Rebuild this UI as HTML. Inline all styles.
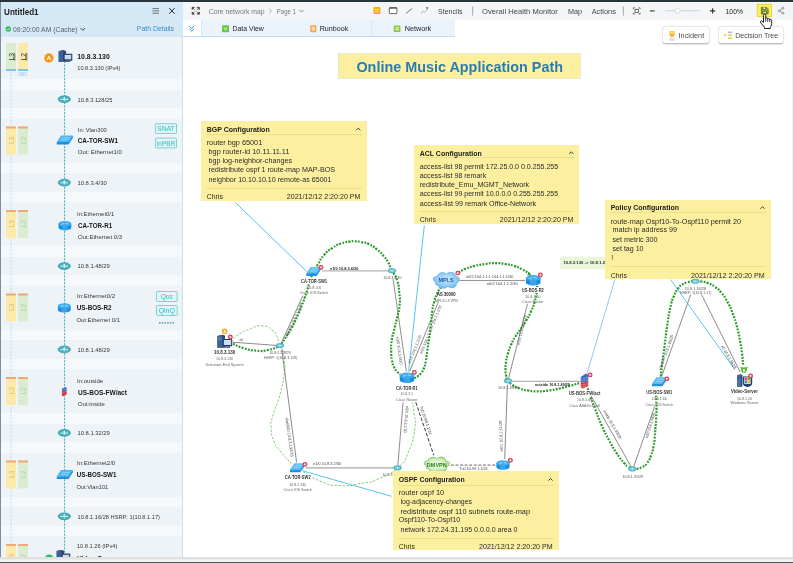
<!DOCTYPE html>
<html><head><meta charset="utf-8"><title>Online Music Application Path</title>
<style>
html,body{margin:0;padding:0;}
body{width:793px;height:563px;overflow:hidden;background:#fff;position:relative;font-family:"Liberation Sans",sans-serif;}
div{position:absolute;box-sizing:border-box;}
svg{position:absolute;left:0;top:0;will-change:transform;}
svg text{font-family:"Liberation Sans",sans-serif;}
#topbar{left:0;top:0;width:793px;height:2px;background:#27343c;}
#leftedge{left:0;top:2px;width:1px;height:555px;background:#7f8f9a;}
#panel{left:1px;top:2px;width:182px;height:555px;background:#eef3f7;overflow:hidden;}
#pborder{left:181px;top:34.6px;width:1px;height:521px;background:#c9e0f1;}
#ptitle{left:0;top:0;width:182px;height:18.5px;background:#d5e8f6;border-bottom:1px solid #c9dfef;}
#psub{left:0;top:18px;width:182px;height:17px;background:#d5e8f6;}
.gap{left:0;width:181px;background:#f6f9fc;}
#toolbar{left:183px;top:2px;width:610px;height:18px;background:#f4f5f6;}
#tabs{left:183px;top:20px;width:272px;height:17px;background:#eaf3fb;border-bottom:1px solid #c5dcee;}
#tabs .chev{left:0;top:0;width:18.6px;height:16px;background:#fff;border-right:1px solid #d5e6f3;}
#tabs .sep{top:0;width:1px;height:16px;background:#dbe9f5;}
#bottombar{left:0;top:557.3px;width:793px;height:4.4px;background:linear-gradient(#e6e6e6 0,#dadada 22%,#ebebeb 45%,#f4f4f4 80%,#fbfbfb 100%);}
#redge{left:792px;top:20px;width:1px;height:537px;background:#f1f2f3;}
#bottomline{left:0;top:561.8px;width:793px;height:2px;background:#505050;}
.note{background:#fcf0a0;}
.note .hl{left:5px;right:5px;height:1px;background:#f1dd84;}
.btn{background:#fff;border-radius:2px;box-shadow:0 0.5px 2px rgba(0,0,0,.35);}
</style></head><body>
<div id="topbar"></div>
<div id="leftedge"></div>
<div id="panel">
<div id="ptitle"></div><div id="psub"></div><div id="pborder"></div>
<div class="gap" style="top:77.2px;height:10.6px"></div>
<div class="gap" style="top:106.2px;height:10.6px"></div>
<div class="gap" style="top:160.7px;height:10.6px"></div>
<div class="gap" style="top:189.7px;height:10.6px"></div>
<div class="gap" style="top:244.3px;height:10.6px"></div>
<div class="gap" style="top:273.3px;height:10.6px"></div>
<div class="gap" style="top:327.8px;height:10.6px"></div>
<div class="gap" style="top:356.8px;height:10.6px"></div>
<div class="gap" style="top:411.4px;height:10.6px"></div>
<div class="gap" style="top:440.4px;height:10.6px"></div>
<div class="gap" style="top:494.9px;height:10.6px"></div>
<div class="gap" style="top:523.9px;height:10.6px"></div>
</div>
<div id="toolbar"></div>
<div id="tabs"><div class="chev"></div><div class="sep" style="left:188px"></div></div>
<svg width="793" height="563" viewBox="0 0 793 563">
<defs>
<radialGradient id="gmpls" cx="0.5" cy="0.45" r="0.6"><stop offset="0" stop-color="#cfe9fb"/><stop offset="0.55" stop-color="#9dd0f5"/><stop offset="1" stop-color="#62b4ee"/></radialGradient>
<radialGradient id="gdm" cx="0.5" cy="0.5" r="0.6"><stop offset="0" stop-color="#f1fbe8"/><stop offset="0.6" stop-color="#d5f0c0"/><stop offset="1" stop-color="#8fd16f"/></radialGradient>
</defs>
<path d="M233.0 338.4 C235.5 336.8 234.8 336.6 240.5 333.5 C246.2 330.4 242.8 331.6 250.0 329.0 C257.2 326.4 254.7 325.5 262.0 325.8 C269.3 326.1 267.2 326.8 272.0 330.0 C276.8 333.2 274.3 331.5 276.5 335.5 C278.7 339.5 277.8 339.8 278.5 342.0" fill="none" stroke="#5cb548" stroke-width="0.75" stroke-dasharray="2.4 1.5"/>
<path d="M282.6 349.7 C283.3 353.8 284.1 353.8 284.6 362.0 C285.1 370.2 285.9 363.0 284.2 374.3 C282.5 385.6 283.3 382.1 279.5 396.0 C275.7 409.9 275.6 405.2 272.8 416.0 C270.0 426.8 270.8 420.1 271.2 428.4 C271.6 436.7 271.0 433.5 274.0 441.0 C277.0 448.5 274.0 443.2 280.1 451.0 C286.2 458.8 288.3 459.9 292.4 464.3" fill="none" stroke="#5cb548" stroke-width="0.75" stroke-dasharray="2.4 1.5"/>
<path d="M302.8 471.5 C308.8 474.8 308.5 476.6 320.8 481.3 C333.1 486.0 325.8 484.9 339.7 485.5 C353.6 486.1 349.2 485.5 362.4 483.2 C375.6 480.9 367.3 484.0 379.4 478.5 C391.5 473.0 389.2 475.3 398.8 466.6 C408.4 457.9 402.8 465.3 408.2 452.4 C413.6 439.5 413.0 440.6 414.9 427.8 C416.8 415.0 414.8 422.5 414.0 414.0 C413.2 405.5 413.1 406.2 412.6 402.3" fill="none" stroke="#5cb548" stroke-width="0.75" stroke-dasharray="2.4 1.5"/>
<line x1="232.5" y1="342.2" x2="276" y2="345.4" stroke="#3c3c3c" stroke-width="0.6"/>
<line x1="281.1" y1="343.4" x2="302.9" y2="295.6" stroke="#3c3c3c" stroke-width="0.6"/>
<line x1="281.7" y1="348.8" x2="296.6" y2="462.4" stroke="#3c3c3c" stroke-width="0.6"/>
<line x1="322" y1="270.9" x2="388" y2="270.9" stroke="#8c8c8c" stroke-width="0.8"/>
<line x1="393.1" y1="279.2" x2="406.4" y2="371.5" stroke="#3c3c3c" stroke-width="0.6"/>
<line x1="409.6" y1="371.5" x2="438.5" y2="301.5" stroke="#3c3c3c" stroke-width="0.6"/>
<line x1="459.5" y1="280.45" x2="525" y2="280.45" stroke="#6a6a6a" stroke-width="0.75"/>
<line x1="527.5" y1="303.8" x2="508.4" y2="379" stroke="#3c3c3c" stroke-width="0.6"/>
<line x1="512.2" y1="381.3" x2="580.2" y2="381.3" stroke="#8c8c8c" stroke-width="0.8"/>
<line x1="507.4" y1="384.7" x2="504.7" y2="459" stroke="#3c3c3c" stroke-width="0.6"/>
<line x1="305.7" y1="467.8" x2="394" y2="467.8" stroke="#a9a9a9" stroke-width="1.2"/>
<line x1="397.8" y1="465.7" x2="403.1" y2="402.3" stroke="#3c3c3c" stroke-width="0.6"/>
<line x1="415.8" y1="402.3" x2="433.8" y2="455.3" stroke="#222" stroke-width="0.9" stroke-dasharray="3.6 1.8"/>
<line x1="450.8" y1="465.1" x2="496.2" y2="465.1" stroke="#555" stroke-width="0.9" stroke-dasharray="3 1.6"/>
<line x1="591.2" y1="396" x2="631.5" y2="467.4" stroke="#3c3c3c" stroke-width="0.6"/>
<line x1="633.4" y1="467.4" x2="654.6" y2="406.5" stroke="#3c3c3c" stroke-width="0.6"/>
<line x1="661.8" y1="376" x2="690.7" y2="294.6" stroke="#3c3c3c" stroke-width="0.6"/>
<line x1="701.5" y1="294.6" x2="740.2" y2="372.1" stroke="#3c3c3c" stroke-width="0.6"/>
<line x1="235.3" y1="202.5" x2="306.9" y2="271.6" stroke="#2fb4f2" stroke-width="0.8"/>
<line x1="424.3" y1="225.5" x2="408.6" y2="371.5" stroke="#2fb4f2" stroke-width="0.8"/>
<line x1="614.9" y1="279.5" x2="587.0" y2="373.4" stroke="#4f9ff0" stroke-width="0.6"/>
<line x1="670.5" y1="279.5" x2="734.8" y2="369.5" stroke="#2fb4f2" stroke-width="0.8"/>
<line x1="302.8" y1="470.9" x2="391.5" y2="496.3" stroke="#2fb4f2" stroke-width="0.8"/>
<path d="M233.0 343.7 C236.7 345.2 236.1 346.0 244.0 348.3 C251.9 350.6 248.7 350.1 256.7 350.7 C264.7 351.3 261.1 351.3 268.0 350.0 C274.9 348.7 274.3 347.9 277.5 346.9" fill="none" stroke="#2c9a2a" stroke-width="2.2" stroke-dasharray="1.9 1.3"/>
<path d="M281.5 344.0 C283.2 341.3 283.1 341.4 286.5 336.0 C289.9 330.6 288.8 333.0 291.7 327.9 C294.6 322.8 292.9 325.6 295.2 320.8 C297.5 316.0 296.3 318.7 298.5 313.6 C300.7 308.5 299.7 310.9 301.8 305.5 C303.9 300.1 303.2 301.7 304.8 297.4 C306.4 293.1 305.5 295.8 306.5 292.5 C307.5 289.2 306.9 291.0 307.9 287.5 C308.9 284.0 308.4 285.7 309.6 282.0 C310.8 278.3 310.2 279.8 311.6 276.3 C313.0 272.8 313.0 273.0 313.7 271.4" fill="none" stroke="#2c9a2a" stroke-width="2.2" stroke-dasharray="1.9 1.3"/>
<path d="M315.0 268.5 C316.1 267.0 315.2 268.5 318.2 264.0 C321.2 259.5 319.3 260.3 324.0 255.0 C328.7 249.7 326.7 251.8 332.4 248.0 C338.1 244.2 335.3 245.6 341.0 243.5 C346.7 241.4 344.9 242.4 349.4 241.7 C353.9 241.0 350.7 241.2 354.6 241.3 C358.5 241.4 356.2 241.0 361.0 242.0 C365.8 243.0 363.6 241.7 368.9 244.2 C374.2 246.7 372.0 245.4 377.0 249.5 C382.0 253.6 380.3 252.3 384.0 256.5 C387.7 260.7 385.8 258.2 388.0 262.0 C390.2 265.8 389.4 264.9 390.7 267.8 C392.0 270.7 391.6 269.7 392.0 270.7" fill="none" stroke="#2c9a2a" stroke-width="2.2" stroke-dasharray="1.9 1.3"/>
<path d="M393.5 273.0 C394.8 275.7 395.4 274.3 397.3 281.0 C399.2 287.7 398.5 284.8 399.3 293.0 C400.1 301.2 400.4 297.4 399.6 305.7 C398.8 314.0 398.7 310.3 397.0 318.0 C395.3 325.7 396.1 321.6 394.4 328.9 C392.7 336.2 392.9 332.4 391.8 340.0 C390.7 347.6 391.1 344.9 391.2 351.6 C391.3 358.3 391.1 355.0 392.0 360.0 C392.9 365.0 392.2 362.9 393.9 366.7 C395.6 370.5 394.9 369.0 397.0 371.5 C399.1 374.0 399.1 373.4 400.1 374.3" fill="none" stroke="#2c9a2a" stroke-width="2.2" stroke-dasharray="1.9 1.3"/>
<path d="M414.5 378.2 C415.7 377.5 415.8 377.7 418.0 376.0 C420.2 374.3 419.1 375.5 421.0 373.0 C422.9 370.5 422.2 372.6 423.8 368.6 C425.4 364.6 424.7 366.7 425.8 361.0 C426.9 355.3 426.2 358.6 427.2 351.6 C428.2 344.6 427.7 347.6 428.8 340.0 C429.9 332.4 429.6 335.3 430.4 328.9 C431.2 322.5 430.7 326.8 431.3 320.8 C431.9 314.8 431.3 317.3 432.3 311.0 C433.3 304.7 432.6 307.6 434.2 301.9 C435.8 296.2 434.9 298.7 437.0 294.0 C439.1 289.3 439.3 289.8 440.4 287.7" fill="none" stroke="#2c9a2a" stroke-width="2.2" stroke-dasharray="1.9 1.3"/>
<path d="M458.5 272.6 C460.8 271.3 460.1 271.0 465.5 268.8 C470.9 266.6 468.1 267.6 474.6 266.0 C481.1 264.4 478.1 265.0 485.0 264.0 C491.9 263.0 488.7 263.1 495.4 263.1 C502.1 263.1 498.7 263.0 505.0 264.0 C511.3 265.0 508.6 264.2 514.3 266.0 C520.0 267.8 517.0 266.8 522.0 269.3 C527.0 271.8 526.9 272.1 529.4 273.5" fill="none" stroke="#2c9a2a" stroke-width="2.2" stroke-dasharray="1.9 1.3"/>
<path d="M537.2 286.0 C537.0 288.3 537.5 287.7 536.6 293.0 C535.7 298.3 536.5 295.8 534.6 302.0 C532.7 308.2 533.8 305.3 531.0 311.5 C528.2 317.7 529.6 314.8 526.3 320.5 C523.0 326.2 524.6 323.2 521.0 328.5 C517.4 333.8 518.7 331.0 515.4 336.5 C512.1 342.0 513.5 339.3 511.0 345.0 C508.5 350.7 509.7 347.8 508.0 353.5 C506.3 359.2 506.8 356.8 506.0 362.0 C505.2 367.2 505.5 364.7 505.5 369.0 C505.5 373.3 505.3 371.3 506.0 375.0 C506.7 378.7 505.4 376.7 507.6 380.0 C509.8 383.3 508.5 382.2 512.5 385.0 C516.5 387.8 514.5 386.7 519.7 388.5 C524.9 390.3 522.3 389.6 528.0 390.5 C533.7 391.4 530.0 391.3 536.7 391.3 C543.4 391.3 540.4 391.5 548.0 390.6 C555.6 389.7 552.1 390.1 559.4 388.5 C566.7 386.9 563.1 387.7 570.0 385.8 C576.9 383.9 576.8 383.8 580.2 382.8" fill="none" stroke="#2c9a2a" stroke-width="2.2" stroke-dasharray="1.9 1.3"/>
<path d="M586.5 386.0 C586.8 386.5 586.1 383.9 587.4 387.6 C588.7 391.3 588.0 390.1 590.5 397.0 C593.0 403.9 591.3 399.1 595.0 408.4 C598.7 417.7 596.8 414.3 601.5 425.0 C606.2 435.7 604.2 431.2 609.2 440.5 C614.2 449.8 611.5 445.4 616.5 453.0 C621.5 460.6 620.5 458.8 624.3 463.2 C628.1 467.6 625.8 464.7 628.0 466.3 C630.2 467.9 629.9 467.4 630.9 468.0" fill="none" stroke="#2c9a2a" stroke-width="2.2" stroke-dasharray="1.9 1.3"/>
<path d="M636.6 468.9 C638.6 468.3 639.0 468.9 642.5 467.0 C646.0 465.1 644.2 467.0 647.0 463.2 C649.8 459.4 648.8 461.2 651.0 455.5 C653.2 449.8 652.3 452.4 653.6 446.2 C654.9 440.0 654.2 443.3 654.8 437.0 C655.4 430.7 655.0 433.6 655.5 427.3 C656.0 421.0 655.9 424.3 656.2 418.0 C656.5 411.7 656.5 414.1 656.5 408.4 C656.5 402.7 656.4 405.2 656.3 401.0 C656.2 396.8 656.2 397.5 656.1 395.8" fill="none" stroke="#2c9a2a" stroke-width="2.2" stroke-dasharray="1.9 1.3"/>
<path d="M659.5 386.0 C659.9 382.7 659.8 384.3 660.8 376.0 C661.8 367.7 661.2 371.1 662.5 361.0 C663.8 350.9 663.1 357.0 664.6 345.7 C666.1 334.4 665.1 339.6 667.0 327.0 C668.9 314.4 668.1 317.8 670.3 307.8 C672.5 297.8 671.0 303.3 673.5 297.0 C676.0 290.7 675.0 293.0 677.8 288.9 C680.6 284.8 678.8 287.0 682.0 284.8 C685.2 282.6 682.8 283.6 687.3 282.3 C691.8 281.0 690.5 281.2 695.4 281.0 C700.3 280.8 697.8 280.9 702.0 281.6 C706.2 282.3 703.8 281.4 708.1 283.2 C712.4 285.0 710.6 283.8 715.0 287.0 C719.4 290.2 717.1 287.7 721.3 292.7 C725.5 297.7 723.7 295.1 727.5 302.0 C731.3 308.9 729.5 305.2 732.7 313.5 C735.9 321.8 734.5 317.5 737.0 327.0 C739.5 336.5 738.5 333.2 740.2 341.9 C741.9 350.6 741.0 345.4 742.0 353.0 C743.0 360.6 742.7 360.7 743.1 364.6" fill="none" stroke="#2c9a2a" stroke-width="2.2" stroke-dasharray="1.9 1.3"/>
<ellipse cx="280" cy="345.6" rx="4" ry="2.3" fill="#5cc3d2" stroke="#2a9bb0" stroke-width="0.4"/><path d="M277.6 345.6 H282.4 M280 344.3 V346.9" stroke="#e6f7fa" stroke-width="0.6"/>
<ellipse cx="392" cy="270.7" rx="4" ry="2.3" fill="#5cc3d2" stroke="#2a9bb0" stroke-width="0.4"/><path d="M389.6 270.7 H394.4 M392 269.4 V272.0" stroke="#e6f7fa" stroke-width="0.6"/>
<ellipse cx="397.5" cy="467.9" rx="4" ry="2.3" fill="#5cc3d2" stroke="#2a9bb0" stroke-width="0.4"/><path d="M395.1 467.9 H399.9 M397.5 466.6 V469.2" stroke="#e6f7fa" stroke-width="0.6"/>
<ellipse cx="508" cy="380.9" rx="4" ry="2.3" fill="#5cc3d2" stroke="#2a9bb0" stroke-width="0.4"/><path d="M505.6 380.9 H510.4 M508 379.6 V382.2" stroke="#e6f7fa" stroke-width="0.6"/>
<ellipse cx="632.3" cy="468.9" rx="4" ry="2.3" fill="#5cc3d2" stroke="#2a9bb0" stroke-width="0.4"/><path d="M629.9 468.9 H634.7 M632.3 467.6 V470.2" stroke="#e6f7fa" stroke-width="0.6"/>
<ellipse cx="695.4" cy="281.3" rx="4" ry="2.3" fill="#5cc3d2" stroke="#2a9bb0" stroke-width="0.4"/><path d="M693.0 281.3 H697.8 M695.4 280.0 V282.6" stroke="#e6f7fa" stroke-width="0.6"/>
<path d="M310.8 266.9 H321.0 L316.6 273.2 H306.3 Z" fill="#58bdf4"/><path d="M306.3 273.2 H316.6 L321.0 266.9 V269.6 L316.6 275.9 H306.3 Z" fill="#1f93df"/><path d="M311.8 268.9 H318.0 M310.0 271.0 H316.4" stroke="#d3ebfb" stroke-width="0.55" fill="none"/>
<circle cx="321" cy="267.3" r="2.4" fill="#d8283c"/><path d="M319.51 267.3 H322.49 M321 265.81 V268.79" stroke="#fff" stroke-width="0.85"/>
<path d="M294.5 463.3 H304.7 L300.3 469.6 H290.0 Z" fill="#58bdf4"/><path d="M290.0 469.6 H300.3 L304.7 463.3 V466.0 L300.3 472.3 H290.0 Z" fill="#1f93df"/><path d="M295.5 465.3 H301.7 M293.7 467.4 H300.1" stroke="#d3ebfb" stroke-width="0.55" fill="none"/>
<circle cx="304.9" cy="464.3" r="2.4" fill="#d8283c"/><path d="M303.41 464.3 H306.39 M304.9 462.81 V465.79" stroke="#fff" stroke-width="0.85"/>
<path d="M656.5 377.3 H666.8 L662.3 383.6 H652.0 Z" fill="#58bdf4"/><path d="M652.0 383.6 H662.3 L666.8 377.3 V380.0 L662.3 386.3 H652.0 Z" fill="#1f93df"/><path d="M657.5 379.3 H663.8 M655.7 381.4 H662.1" stroke="#d3ebfb" stroke-width="0.55" fill="none"/>
<circle cx="666.9" cy="378.8" r="2.4" fill="#d8283c"/><path d="M665.41 378.8 H668.39 M666.9 377.31 V380.29" stroke="#fff" stroke-width="0.85"/>
<path d="M399.7 375.5 V379.9 A7.3 3.0 0 0 0 414.3 379.9 V375.5 Z" fill="#1a8bdf"/><path d="M403.7 377.9 V382.7 H410.3 V377.9 Z" fill="#55bbf5" opacity="0.5"/><ellipse cx="407" cy="375.5" rx="7.3" ry="3.0" fill="#41adf1"/><path d="M403.0 376.1 L406.3 375.2 M407.7 374.8 L411.0 375.7" stroke="#e9f6fe" stroke-width="0.6"/>
<circle cx="414.3" cy="372.4" r="2.4" fill="#d8283c"/><path d="M412.81 372.4 H415.79 M414.3 370.91 V373.89" stroke="#fff" stroke-width="0.85"/>
<path d="M525.9000000000001 278.0 V282.4 A7.3 3.0 0 0 0 540.5 282.4 V278.0 Z" fill="#1a8bdf"/><path d="M529.9 280.4 V285.2 H536.5 V280.4 Z" fill="#55bbf5" opacity="0.5"/><ellipse cx="533.2" cy="278.0" rx="7.3" ry="3.0" fill="#41adf1"/><path d="M529.2 278.6 L532.5 277.7 M533.9000000000001 277.3 L537.2 278.2" stroke="#e9f6fe" stroke-width="0.6"/>
<circle cx="540.4" cy="275" r="2.4" fill="#d8283c"/><path d="M538.91 275 H541.89 M540.4 273.51 V276.49" stroke="#fff" stroke-width="0.85"/>
<path d="M496.4 463.0 V467.0 A6.6 2.8 0 0 0 509.6 467.0 V463.0 Z" fill="#1a8bdf"/><path d="M500.0 465.2 V469.6 H506.0 V465.2 Z" fill="#55bbf5" opacity="0.5"/><ellipse cx="503" cy="463.0" rx="6.6" ry="2.8" fill="#41adf1"/><path d="M499.4 463.6 L502.3 462.7 M503.7 462.3 L506.6 463.2" stroke="#e9f6fe" stroke-width="0.6"/>
<circle cx="510.4" cy="460.3" r="2.4" fill="#d8283c"/><path d="M508.91 460.3 H511.89 M510.4 458.81 V461.79" stroke="#fff" stroke-width="0.85"/>
<path d="M436.2 282.2 C431.7 281.0 432.5 275.6 437.3 276.5 C437.8 272.2 444.2 271.2 446.3 274.2 C448.9 270.9 455.8 271.9 455.6 276.5 C460.6 276.0 460.6 282.2 456.4 282.9 C457.4 287.7 450.5 289.2 447.9 286.2 C445.2 289.5 438.4 288.8 438.4 285.2 C435.7 285.5 434.6 283.9 436.2 282.2 Z" fill="url(#gmpls)" stroke="#4a9fe0" stroke-width="0.5"/>
<circle cx="457.8" cy="273.1" r="2.4" fill="#d8283c"/><path d="M456.31 273.1 H459.29 M457.8 271.61 V274.59" stroke="#fff" stroke-width="0.85"/>
<text x="438.40" y="282.00" font-size="5.7" font-weight="bold" fill="#155aa8" textLength="15.19" lengthAdjust="spacingAndGlyphs">MPLS</text>
<path d="M427.1 466.2 C422.8 465.2 423.5 460.1 428.1 461.0 C428.6 457.0 434.8 456.1 436.8 458.9 C439.4 455.8 446.0 456.7 445.7 461.0 C450.6 460.6 450.6 466.2 446.5 466.9 C447.5 471.3 440.9 472.7 438.3 469.9 C435.8 473.0 429.2 472.4 429.2 469.0 C426.6 469.3 425.6 467.8 427.1 466.2 Z" fill="url(#gdm)" stroke="#4aa83c" stroke-width="0.5"/>
<text x="426.85" y="467.00" font-size="5.2" font-weight="bold" fill="#2f7d1f" textLength="19.91" lengthAdjust="spacingAndGlyphs">DMVPN</text>
<path d="M580.7 376.9 L586.0200000000001 373.5 L588.3000000000001 374.7 V381.3 L582.98 382.8 L580.7 381.75 Z" fill="#3b6fc0"/><path d="M580.7 381.75 L582.98 382.8 L588.3000000000001 381.3 V386.0 L582.98 388.5 L580.7 387.3 Z" fill="#d9363a"/><path d="M580.7 384.0 L582.98 385.05 L588.3000000000001 383.4 M580.7 386.1 L582.98 387.0 L588.3000000000001 385.35" stroke="#f7bcbc" stroke-width="0.45" fill="none"/><path d="M580.7 378.0 L582.98 378.9 L588.3000000000001 376.8 M580.7 379.95 L582.98 380.85 L588.3000000000001 379.05" stroke="#a9c4ec" stroke-width="0.45" fill="none"/>
<circle cx="590.1" cy="374.9" r="2.4" fill="#d8283c"/><path d="M588.61 374.9 H591.59 M590.1 373.41 V376.39" stroke="#fff" stroke-width="0.85"/>
<g transform="translate(217.4,334.7) scale(1.0)"><path d="M0 1.3 L5 0 L7.6 0.9 V13 H0 Z" fill="#2b4775"/><path d="M0 1.3 L5 0 V13 H0Z" fill="#3f6299"/><path d="M1 3.2 H4 M1 4.8 H4" stroke="#9fb6d6" stroke-width="0.5"/><rect x="5.4" y="4.2" width="9.4" height="7.4" rx="0.6" fill="#27416c"/><rect x="6.5" y="5.3" width="7.2" height="5.0" fill="#cfdcec"/><rect x="7.7" y="11.6" width="5" height="1.4" fill="#27416c"/></g>
<circle cx="224.6" cy="331.2" r="2.8" fill="#f7a726"/>
<text x="224.6" y="333.00" font-size="3.8" font-weight="bold" text-anchor="middle" fill="#fff">A</text>
<circle cx="230.3" cy="337" r="2.4" fill="#d8283c"/><path d="M228.81 337 H231.79 M230.3 335.51 V338.49" stroke="#fff" stroke-width="0.85"/>
<g transform="translate(736.8,374)"><path d="M0.3 1.3 L4.0 0.2 L5.6 0.9 V12.8 H0.3 Z" fill="#2b4775"/><path d="M0.3 1.3 L4.0 0.2 V12.8 H0.3Z" fill="#4f72a6"/><path d="M1.1 3 H3.3 M1.1 4.4 H3.3" stroke="#2b4775" stroke-width="0.5"/><path d="M6.0 2.6 H15.4 V8.6 C15.4 11.8 13.8 12.9 10.7 12.9 C7.6 12.9 6.0 11.8 6.0 8.6 Z" fill="#27416c"/><rect x="7.4" y="3.4" width="6.4" height="6.6" fill="#dfe8f3"/><rect x="8.0" y="4.0" width="2.4" height="2.4" fill="#e5532d"/><rect x="10.9" y="4.0" width="2.4" height="2.4" fill="#7fba2c"/><rect x="8.0" y="6.9" width="2.4" height="2.4" fill="#2d9fe0"/><rect x="10.9" y="6.9" width="2.4" height="2.4" fill="#fbb917"/></g>
<path d="M740 366.4 L744 368.2 L748 366.4 L746 371 L742 371 Z" fill="#5cb531"/><circle cx="744" cy="370.1" r="2.8" fill="#5cb531"/>
<text x="744.0" y="372.00" font-size="3.6" font-weight="bold" text-anchor="middle" fill="#fff">B</text>
<circle cx="750.6" cy="375.9" r="2.4" fill="#d8283c"/><path d="M749.11 375.9 H752.09 M750.6 374.41 V377.39" stroke="#fff" stroke-width="0.85"/>
<path d="M528.6 272.0 L531.8 275.6 L527.3 275.2 Z" fill="#2c9a2a"/>
<rect x="300.2" y="277.8" width="27.6" height="5.8" fill="#fff"/>
<text x="301.00" y="283.00" font-size="4.9" font-weight="bold" fill="#333" textLength="26.00" lengthAdjust="spacingAndGlyphs">CA-TOR-SW1</text>
<text x="306.70" y="289.00" font-size="4.1" fill="#666" textLength="14.60" lengthAdjust="spacingAndGlyphs">10.8.3.6</text>
<text x="299.80" y="294.00" font-size="4.1" fill="#666" textLength="28.40" lengthAdjust="spacingAndGlyphs">Cisco IOS Switch</text>
<rect x="213.1" y="349.1" width="23.0" height="5.8" fill="#fff"/>
<text x="213.90" y="354.00" font-size="4.9" font-weight="bold" fill="#333" textLength="21.41" lengthAdjust="spacingAndGlyphs">10.8.3.130</text>
<text x="216.10" y="360.00" font-size="4.1" fill="#666" textLength="17.01" lengthAdjust="spacingAndGlyphs">10.8.3.130</text>
<text x="205.50" y="366.00" font-size="4.1" fill="#666" textLength="38.19" lengthAdjust="spacingAndGlyphs">Unknown End System</text>
<text x="269.25" y="354.00" font-size="4.2" fill="#5a5a5a" textLength="21.51" lengthAdjust="spacingAndGlyphs">10.8.3.128/25</text>
<text x="263.95" y="359.00" font-size="4.2" fill="#5a5a5a" textLength="33.49" lengthAdjust="spacingAndGlyphs">HSRP: 1(10.8.3.129)</text>
<text x="383.15" y="279.00" font-size="4.2" fill="#5a5a5a" textLength="18.30" lengthAdjust="spacingAndGlyphs">10.8.3.4/30</text>
<rect x="283.9" y="474.3" width="27.6" height="5.8" fill="#fff"/>
<text x="284.70" y="479.00" font-size="4.9" font-weight="bold" fill="#333" textLength="26.00" lengthAdjust="spacingAndGlyphs">CA-TOR-SW2</text>
<text x="289.20" y="486.00" font-size="4.1" fill="#666" textLength="17.01" lengthAdjust="spacingAndGlyphs">10.8.2.130</text>
<text x="283.50" y="491.00" font-size="4.1" fill="#666" textLength="28.40" lengthAdjust="spacingAndGlyphs">Cisco IOS Switch</text>
<rect x="395.1" y="384.6" width="23.4" height="5.8" fill="#fff"/>
<text x="395.90" y="390.00" font-size="4.9" font-weight="bold" fill="#333" textLength="21.81" lengthAdjust="spacingAndGlyphs">CA-TOR-R1</text>
<text x="400.55" y="395.00" font-size="4.1" fill="#666" textLength="12.50" lengthAdjust="spacingAndGlyphs">10.8.3.1</text>
<text x="396.10" y="401.00" font-size="4.1" fill="#666" textLength="21.40" lengthAdjust="spacingAndGlyphs">Cisco Router</text>
<text x="437.05" y="296.00" font-size="4.7" font-weight="bold" fill="#222" textLength="18.49" lengthAdjust="spacingAndGlyphs">AS 30000</text>
<text x="435.05" y="302.00" font-size="4.2" fill="#5a5a5a" textLength="22.69" lengthAdjust="spacingAndGlyphs">MPLS L3 VPN</text>
<rect x="521.0" y="287.1" width="23.6" height="5.8" fill="#fff"/>
<text x="521.80" y="292.00" font-size="4.9" font-weight="bold" fill="#333" textLength="22.00" lengthAdjust="spacingAndGlyphs">US-BOS-R2</text>
<text x="525.05" y="298.00" font-size="4.1" fill="#666" textLength="15.50" lengthAdjust="spacingAndGlyphs">10.8.1.50</text>
<text x="522.00" y="303.00" font-size="4.1" fill="#666" textLength="21.60" lengthAdjust="spacingAndGlyphs">Cisco Router</text>
<text x="498.00" y="389.00" font-size="4.2" fill="#5a5a5a" textLength="20.80" lengthAdjust="spacingAndGlyphs">10.8.1.48/29</text>
<rect x="567.9" y="390.3" width="33.4" height="5.8" fill="#fff"/>
<text x="568.70" y="395.00" font-size="4.9" font-weight="bold" fill="#333" textLength="31.80" lengthAdjust="spacingAndGlyphs">US-BOS-FW/act</text>
<text x="577.10" y="401.00" font-size="4.1" fill="#666" textLength="15.00" lengthAdjust="spacingAndGlyphs">10.8.1.49</text>
<text x="569.20" y="407.00" font-size="4.1" fill="#666" textLength="30.81" lengthAdjust="spacingAndGlyphs">Cisco ASA Firewall</text>
<text x="622.40" y="478.00" font-size="4.2" fill="#5a5a5a" textLength="20.80" lengthAdjust="spacingAndGlyphs">10.8.1.32/29</text>
<rect x="645.5" y="389.0" width="27.6" height="5.8" fill="#fff"/>
<text x="646.30" y="394.00" font-size="4.9" font-weight="bold" fill="#333" textLength="26.00" lengthAdjust="spacingAndGlyphs">US-BOS-SW1</text>
<text x="651.80" y="400.00" font-size="4.1" fill="#666" textLength="15.00" lengthAdjust="spacingAndGlyphs">10.8.1.66</text>
<text x="645.40" y="406.00" font-size="4.1" fill="#666" textLength="27.80" lengthAdjust="spacingAndGlyphs">Cisco IOS Switch</text>
<text x="684.70" y="290.00" font-size="4.2" fill="#5a5a5a" textLength="21.40" lengthAdjust="spacingAndGlyphs">10.8.1.16/28</text>
<text x="680.10" y="294.00" font-size="4.2" fill="#5a5a5a" textLength="31.41" lengthAdjust="spacingAndGlyphs">HSRP: 1(10.8.1.17)</text>
<rect x="730.1" y="388.2" width="28.5" height="5.8" fill="#fff"/>
<text x="730.95" y="393.00" font-size="4.9" font-weight="bold" fill="#333" textLength="26.91" lengthAdjust="spacingAndGlyphs">Video-Server</text>
<text x="736.90" y="400.00" font-size="4.1" fill="#666" textLength="15.00" lengthAdjust="spacingAndGlyphs">10.8.1.26</text>
<text x="730.50" y="404.00" font-size="4.1" fill="#666" textLength="27.80" lengthAdjust="spacingAndGlyphs">Windows Server</text>
<text x="382.50" y="476.00" font-size="4.2" fill="#5a5a5a" textLength="18.00" lengthAdjust="spacingAndGlyphs">10.8.3.0/30</text>
<text x="239.40" y="341.00" font-size="4.0" fill="#444" textLength="3.61" lengthAdjust="spacingAndGlyphs">e0</text>
<text x="330.00" y="270.00" font-size="4.0" font-weight="bold" fill="#222" textLength="28.39" lengthAdjust="spacingAndGlyphs">e1/0 10.8.3.6/30</text>
<text x="466.00" y="278.00" font-size="4.0" fill="#444" textLength="47.39" lengthAdjust="spacingAndGlyphs">e0/2 104.1.1.1 104.1.1.1/30</text>
<text x="486.90" y="285.00" font-size="4.0" fill="#444" textLength="30.80" lengthAdjust="spacingAndGlyphs">e0/2 104.1.1.2/30</text>
<text x="534.90" y="386.00" font-size="4.0" font-weight="bold" fill="#222" textLength="35.00" lengthAdjust="spacingAndGlyphs">outside 10.8.1.49/29</text>
<text x="313.20" y="465.00" font-size="4.0" fill="#444" textLength="27.79" lengthAdjust="spacingAndGlyphs">e1/0 10.8.3.2/30</text>
<text x="459.30" y="470.00" font-size="4.0" fill="#444" textLength="28.40" lengthAdjust="spacingAndGlyphs">Tu0 10.99.1.1/24</text>
<g transform="translate(289.6,437.2) rotate(82)"><text x="-19.75" y="1.43" font-size="4.0" fill="#444" textLength="39.49" lengthAdjust="spacingAndGlyphs">vlan300 10.8.3.132/25</text></g>
<g transform="translate(293.8,320.0) rotate(-65.5)"><text x="-19.00" y="1.43" font-size="4.0" fill="#444" textLength="37.99" lengthAdjust="spacingAndGlyphs">vlan300 10.8.3.131/25</text></g>
<g transform="translate(399.3,350.5) rotate(82)"><text x="-14.00" y="1.43" font-size="4.0" fill="#444" textLength="27.99" lengthAdjust="spacingAndGlyphs">e0/0 10.8.3.5/30</text></g>
<g transform="translate(414.6,349.2) rotate(-68)"><text x="-15.00" y="1.43" font-size="4.0" fill="#444" textLength="30.00" lengthAdjust="spacingAndGlyphs">e0/2 104.1.1.2/30</text></g>
<g transform="translate(426.5,339.5) rotate(-68)"><text x="-15.00" y="1.43" font-size="4.0" fill="#444" textLength="30.00" lengthAdjust="spacingAndGlyphs">e0/3 104.1.1.1/30</text></g>
<g transform="translate(436.6,314.8) rotate(-68)"><text x="-10.00" y="1.43" font-size="4.0" fill="#444" textLength="20.00" lengthAdjust="spacingAndGlyphs">104.1.1.1/30</text></g>
<g transform="translate(406.3,419.3) rotate(95)"><text x="-13.50" y="1.43" font-size="4.0" fill="#444" textLength="26.99" lengthAdjust="spacingAndGlyphs">e0/0 10.8.3.1/30</text></g>
<g transform="translate(426,420.2) rotate(71)"><text x="-15.00" y="1.43" font-size="4.0" fill="#444" textLength="30.00" lengthAdjust="spacingAndGlyphs">Tu0 10.99.1.1/24</text></g>
<g transform="translate(500.9,436) rotate(-92)"><text x="-15.50" y="1.43" font-size="4.0" fill="#444" textLength="31.00" lengthAdjust="spacingAndGlyphs">e0/1 10.8.1.51/29</text></g>
<g transform="translate(521.7,330) rotate(-76)"><text x="-15.00" y="1.43" font-size="4.0" fill="#444" textLength="30.00" lengthAdjust="spacingAndGlyphs">e0/1 10.8.1.50/29</text></g>
<g transform="translate(612.5,424.4) rotate(60)"><text x="-16.25" y="1.43" font-size="4.0" fill="#444" textLength="32.51" lengthAdjust="spacingAndGlyphs">inside 10.8.1.33/29</text></g>
<g transform="translate(650.3,425.4) rotate(-73)"><text x="-13.00" y="1.43" font-size="4.0" fill="#444" textLength="26.00" lengthAdjust="spacingAndGlyphs">e2/0 10.8.1.34/29</text></g>
<g transform="translate(666,352.3) rotate(-70)"><text x="-18.25" y="1.43" font-size="4.0" fill="#444" textLength="36.51" lengthAdjust="spacingAndGlyphs">vlan100 10.8.1.66/28</text></g>
<g transform="translate(728.9,357) rotate(60)"><text x="-13.10" y="1.43" font-size="4.0" fill="#444" textLength="26.20" lengthAdjust="spacingAndGlyphs">e0 10.8.1.26/28</text></g>
<rect x="560.3" y="256.6" width="45.3" height="12.7" fill="#eaf6d9"/>
<text x="563.40" y="264.00" font-size="4.3" font-weight="bold" fill="#2a2a2a" textLength="44.00" lengthAdjust="spacingAndGlyphs">10.8.3.130 -&gt; 10.8.1.26</text>
</svg>
<div class="note" style="left:201px;top:121.4px;width:165.6px;height:79.4px"><div class="hl" style="top:12.8px"></div><div class="hl" style="top:67.1px"></div></div>
<div class="note" style="left:414px;top:144.8px;width:165.4px;height:79.0px"><div class="hl" style="top:12.4px"></div><div class="hl" style="top:66.2px"></div></div>
<div class="note" style="left:605px;top:199.5px;width:165.6px;height:79.2px"><div class="hl" style="top:12.4px"></div><div class="hl" style="top:66.2px"></div></div>
<div class="note" style="left:393px;top:471px;width:165.6px;height:79.4px"><div class="hl" style="top:13.5px"></div><div class="hl" style="top:67.3px"></div></div>
<div class="note" style="left:338.4px;top:53.4px;width:243px;height:25.6px;background:#fcf0a0;border:1px solid #e6e9cc"></div>
<div class="btn" style="left:663px;top:27px;width:46px;height:16px"></div>
<div class="btn" style="left:719px;top:27px;width:64px;height:16px"></div>
<div id="redge"></div><div id="bottombar"></div><div id="bottomline"></div>
<svg width="793" height="563" viewBox="0 0 793 563">
<defs><clipPath id="pclip"><rect x="0" y="37" width="183" height="520"/></clipPath></defs>
<text x="4.10" y="15.00" font-size="8.4" font-weight="bold" fill="#222" textLength="34.48" lengthAdjust="spacingAndGlyphs">Untitled1</text>
<g stroke="#555" stroke-width="0.8"><line x1="152.5" y1="8.6" x2="159" y2="8.6"/><line x1="152.5" y1="10.9" x2="159" y2="10.9"/><line x1="152.5" y1="13.2" x2="159" y2="13.2"/></g>
<g stroke="#222" stroke-width="0.95"><line x1="169.2" y1="8.1" x2="174.6" y2="13.8"/><line x1="174.6" y1="8.1" x2="169.2" y2="13.8"/></g>
<circle cx="8.3" cy="29" r="2.7" fill="#2fbf5f"/><path d="M7 29 L8 30 L9.7 28" stroke="#fff" stroke-width="0.7" fill="none"/>
<text x="13.00" y="32.00" font-size="7" fill="#56606b" textLength="64.50" lengthAdjust="spacingAndGlyphs">09:20:00 AM (Cache)</text>
<path d="M80.5 28 L82.8 30.3 L85.1 28" stroke="#333" stroke-width="0.9" fill="none"/>
<text x="136.80" y="31.00" font-size="7" fill="#3b8ccb" textLength="37.21" lengthAdjust="spacingAndGlyphs">Path Details</text>
<g clip-path="url(#pclip)">
<line x1="11.1" y1="71" x2="11.1" y2="557" stroke="#a9d3ee" stroke-width="0.8" stroke-dasharray="2 1.5"/>
<line x1="64.6" y1="61" x2="64.6" y2="557" stroke="#35a9b6" stroke-width="0.9" stroke-dasharray="2.2 1.2"/>
<rect x="6" y="43" width="10" height="28" fill="#dcecd0"/><rect x="6" y="69" width="10" height="2" fill="#7cc4ea"/><text transform="translate(13.5,60.6) rotate(-90)" font-size="6.8" fill="#333" text-decoration="underline">L3</text>
<rect x="18" y="43" width="10" height="28" fill="#fde9a9"/><rect x="18" y="69" width="10" height="2" fill="#7cc4ea"/><text transform="translate(25.5,60.6) rotate(-90)" font-size="6.8" fill="#333" text-decoration="underline">L2</text>
<rect x="6" y="126.5" width="10" height="28" fill="#fde9a9"/><rect x="6" y="126.5" width="10" height="2" fill="#f2a777"/><text transform="translate(13.5,144.1) rotate(-90)" font-size="6.8" fill="#d2c08c">L3</text>
<rect x="18" y="126.5" width="10" height="28" fill="#dcecd0"/><rect x="18" y="126.5" width="10" height="2" fill="#f2a777"/><text transform="translate(25.5,144.1) rotate(-90)" font-size="6.8" fill="#b5cfa0">L2</text>
<rect x="6" y="210.0" width="10" height="28" fill="#fde9a9"/><rect x="6" y="210.0" width="10" height="2" fill="#f2a777"/><text transform="translate(13.5,227.6) rotate(-90)" font-size="6.8" fill="#d2c08c">L3</text>
<rect x="18" y="210.0" width="10" height="28" fill="#dcecd0"/><rect x="18" y="210.0" width="10" height="2" fill="#f2a777"/><text transform="translate(25.5,227.6) rotate(-90)" font-size="6.8" fill="#b5cfa0">L2</text>
<rect x="6" y="293.5" width="10" height="28" fill="#fde9a9"/><rect x="6" y="293.5" width="10" height="2" fill="#f2a777"/><text transform="translate(13.5,311.1) rotate(-90)" font-size="6.8" fill="#d2c08c">L3</text>
<rect x="18" y="293.5" width="10" height="28" fill="#dcecd0"/><rect x="18" y="293.5" width="10" height="2" fill="#f2a777"/><text transform="translate(25.5,311.1) rotate(-90)" font-size="6.8" fill="#b5cfa0">L2</text>
<rect x="6" y="377.0" width="10" height="28" fill="#fde9a9"/><rect x="6" y="377.0" width="10" height="2" fill="#f2a777"/><text transform="translate(13.5,394.6) rotate(-90)" font-size="6.8" fill="#d2c08c">L3</text>
<rect x="18" y="377.0" width="10" height="28" fill="#dcecd0"/><rect x="18" y="377.0" width="10" height="2" fill="#f2a777"/><text transform="translate(25.5,394.6) rotate(-90)" font-size="6.8" fill="#b5cfa0">L2</text>
<rect x="6" y="460.5" width="10" height="28" fill="#fde9a9"/><rect x="6" y="460.5" width="10" height="2" fill="#f2a777"/><text transform="translate(13.5,478.1) rotate(-90)" font-size="6.8" fill="#d2c08c">L3</text>
<rect x="18" y="460.5" width="10" height="28" fill="#dcecd0"/><rect x="18" y="460.5" width="10" height="2" fill="#f2a777"/><text transform="translate(25.5,478.1) rotate(-90)" font-size="6.8" fill="#b5cfa0">L2</text>
<rect x="6" y="544.0" width="10" height="28" fill="#fde9a9"/><rect x="6" y="544.0" width="10" height="2" fill="#f2a777"/><text transform="translate(13.5,561.6) rotate(-90)" font-size="6.8" fill="#d2c08c">L3</text>
<rect x="18" y="544.0" width="10" height="28" fill="#dcecd0"/><rect x="18" y="544.0" width="10" height="2" fill="#f2a777"/><text transform="translate(25.5,561.6) rotate(-90)" font-size="6.8" fill="#b5cfa0">L2</text>
<rect x="18.3" y="72.3" width="8.5" height="3.4" rx="0.8" fill="#dcebf8" stroke="#9fcbec" stroke-width="0.4"/><path d="M21 73.2 L22.5 74.8 L24 73.2" stroke="#4a9bd8" stroke-width="0.5" fill="none"/>
<ellipse cx="64.3" cy="99.2" rx="6.1" ry="3.4" fill="#49b3c1" stroke="#23909f" stroke-width="0.7"/><path d="M60.5 99.4 H68.1 M64.3 97.3 V101.2" stroke="#f2fbfc" stroke-width="0.8" fill="none"/><path d="M63.099999999999994 98.5 L64.3 96.8 L65.5 98.5 Z" fill="#f2fbfc"/>
<text x="77.50" y="102.00" font-size="6.1" fill="#363636" textLength="34.81" lengthAdjust="spacingAndGlyphs">10.8.3.128/25</text>
<ellipse cx="64.3" cy="182.62" rx="6.1" ry="3.4" fill="#49b3c1" stroke="#23909f" stroke-width="0.7"/><path d="M60.5 182.82 H68.1 M64.3 180.8 V184.7" stroke="#f2fbfc" stroke-width="0.8" fill="none"/><path d="M63.099999999999994 181.9 L64.3 180.2 L65.5 181.9 Z" fill="#f2fbfc"/>
<text x="77.50" y="185.00" font-size="6.1" fill="#363636" textLength="29.20" lengthAdjust="spacingAndGlyphs">10.8.3.4/30</text>
<ellipse cx="64.3" cy="266.04" rx="6.1" ry="3.4" fill="#49b3c1" stroke="#23909f" stroke-width="0.7"/><path d="M60.5 266.24 H68.1 M64.3 264.2 V268.1" stroke="#f2fbfc" stroke-width="0.8" fill="none"/><path d="M63.099999999999994 265.4 L64.3 263.6 L65.5 265.4 Z" fill="#f2fbfc"/>
<text x="77.50" y="268.00" font-size="6.1" fill="#363636" textLength="32.30" lengthAdjust="spacingAndGlyphs">10.8.1.48/29</text>
<ellipse cx="64.3" cy="349.46" rx="6.1" ry="3.4" fill="#49b3c1" stroke="#23909f" stroke-width="0.7"/><path d="M60.5 349.65999999999997 H68.1 M64.3 347.6 V351.5" stroke="#f2fbfc" stroke-width="0.8" fill="none"/><path d="M63.099999999999994 348.8 L64.3 347.0 L65.5 348.8 Z" fill="#f2fbfc"/>
<text x="77.50" y="352.00" font-size="6.1" fill="#363636" textLength="32.30" lengthAdjust="spacingAndGlyphs">10.8.1.48/29</text>
<ellipse cx="64.3" cy="432.88000000000005" rx="6.1" ry="3.4" fill="#49b3c1" stroke="#23909f" stroke-width="0.7"/><path d="M60.5 433.08000000000004 H68.1 M64.3 431.0 V434.9" stroke="#f2fbfc" stroke-width="0.8" fill="none"/><path d="M63.099999999999994 432.2 L64.3 430.4 L65.5 432.2 Z" fill="#f2fbfc"/>
<text x="77.50" y="435.00" font-size="6.1" fill="#363636" textLength="32.30" lengthAdjust="spacingAndGlyphs">10.8.1.32/29</text>
<ellipse cx="64.3" cy="516.3" rx="6.1" ry="3.4" fill="#49b3c1" stroke="#23909f" stroke-width="0.7"/><path d="M60.5 516.5 H68.1 M64.3 514.4 V518.3" stroke="#f2fbfc" stroke-width="0.8" fill="none"/><path d="M63.099999999999994 515.6 L64.3 513.9 L65.5 515.6 Z" fill="#f2fbfc"/>
<text x="77.50" y="519.00" font-size="6.1" fill="#363636" textLength="82.50" lengthAdjust="spacingAndGlyphs">10.8.1.16/28 HSRP: 1(10.8.1.17)</text>
<text x="77.30" y="59.00" font-size="7.5" font-weight="bold" fill="#161616" textLength="32.41" lengthAdjust="spacingAndGlyphs">10.8.3.130</text>
<text x="77.30" y="70.00" font-size="6.05" fill="#363636" textLength="43.01" lengthAdjust="spacingAndGlyphs">10.8.3.130 (IPv4)</text>
<text x="77.80" y="132.00" font-size="6.05" fill="#363636" textLength="29.00" lengthAdjust="spacingAndGlyphs">In: Vlan300</text>
<text x="77.80" y="143.00" font-size="7.5" font-weight="bold" fill="#161616" textLength="40.20" lengthAdjust="spacingAndGlyphs">CA-TOR-SW1</text>
<text x="77.80" y="154.00" font-size="6.05" fill="#363636" textLength="43.99" lengthAdjust="spacingAndGlyphs">Out: Ethernet1/0</text>
<text x="77.00" y="216.00" font-size="6.05" fill="#363636" textLength="37.31" lengthAdjust="spacingAndGlyphs">In:Ethernet0/1</text>
<text x="78.00" y="228.00" font-size="7.5" font-weight="bold" fill="#161616" textLength="34.11" lengthAdjust="spacingAndGlyphs">CA-TOR-R1</text>
<text x="78.00" y="239.00" font-size="6.05" fill="#363636" textLength="44.19" lengthAdjust="spacingAndGlyphs">Out:Ethernet 0/3</text>
<text x="77.00" y="298.00" font-size="6.05" fill="#363636" textLength="38.11" lengthAdjust="spacingAndGlyphs">In:Ethernet0/2</text>
<text x="76.80" y="310.00" font-size="7.5" font-weight="bold" fill="#161616" textLength="34.70" lengthAdjust="spacingAndGlyphs">US-BOS-R2</text>
<text x="76.40" y="322.00" font-size="6.05" fill="#363636" textLength="43.59" lengthAdjust="spacingAndGlyphs">Out:Ethernet 0/1</text>
<text x="77.00" y="383.00" font-size="6.05" fill="#363636" textLength="26.11" lengthAdjust="spacingAndGlyphs">In:outside</text>
<text x="78.00" y="395.00" font-size="7.5" font-weight="bold" fill="#161616" textLength="48.90" lengthAdjust="spacingAndGlyphs">US-BOS-FW/act</text>
<text x="78.00" y="406.00" font-size="6.05" fill="#363636" textLength="26.89" lengthAdjust="spacingAndGlyphs">Out:inside</text>
<text x="77.00" y="465.00" font-size="6.05" fill="#363636" textLength="38.21" lengthAdjust="spacingAndGlyphs">In:Ethernet2/0</text>
<text x="76.80" y="477.00" font-size="7.5" font-weight="bold" fill="#161616" textLength="39.60" lengthAdjust="spacingAndGlyphs">US-BOS-SW1</text>
<text x="76.40" y="489.00" font-size="6.05" fill="#363636" textLength="31.90" lengthAdjust="spacingAndGlyphs">Out:Vlan101</text>
<text x="76.90" y="548.00" font-size="6.05" fill="#363636" textLength="40.40" lengthAdjust="spacingAndGlyphs">10.8.1.26 (IPv4)</text>
<text x="77.30" y="561.00" font-size="7.5" font-weight="bold" fill="#161616" textLength="41.01" lengthAdjust="spacingAndGlyphs">Video-Server</text>
<rect x="155.4" y="123.7" width="21.1" height="9.8" rx="1" fill="#e2f6f8" stroke="#52bec8" stroke-width="0.7"/>
<text x="157.20" y="131.00" font-size="7.0" fill="#3fb3be" textLength="17.49" lengthAdjust="spacingAndGlyphs">SNAT</text>
<rect x="155.4" y="138.1" width="21.1" height="9.8" rx="1" fill="#e2f6f8" stroke="#52bec8" stroke-width="0.7"/>
<text x="156.55" y="146.00" font-size="7.0" fill="#3fb3be" textLength="18.80" lengthAdjust="spacingAndGlyphs">InPBR</text>
<rect x="156.4" y="291.5" width="20.8" height="10" rx="1" fill="#e2f6f8" stroke="#52bec8" stroke-width="0.7"/>
<text x="160.65" y="299.00" font-size="7.0" fill="#3fb3be" textLength="12.29" lengthAdjust="spacingAndGlyphs">Qos</text>
<rect x="156.4" y="305.5" width="20.8" height="10" rx="1" fill="#e2f6f8" stroke="#52bec8" stroke-width="0.7"/>
<text x="158.45" y="313.00" font-size="7.0" fill="#3fb3be" textLength="16.69" lengthAdjust="spacingAndGlyphs">QinQ</text>
<line x1="159" y1="322.9" x2="174" y2="322.9" stroke="#3f86c8" stroke-width="1.2" stroke-dasharray="1.5 1.2"/>
<circle cx="48.9" cy="58" r="4.7" fill="#f39a1e"/>
<text x="48.9" y="60.00" font-size="6" font-weight="bold" text-anchor="middle" fill="#fff">A</text>
<circle cx="49.2" cy="559.3" r="4.7" fill="#2fbf5f"/>
<text x="49.2" y="562.00" font-size="6" font-weight="bold" text-anchor="middle" fill="#fff">B</text>
<g transform="translate(58.7,50) scale(1.0)"><path d="M0 1.2 L4.5 0 L7.4 0.9 V11.8 H0 Z" fill="#2b4775"/><path d="M0 1.2 L4.5 0 V11.8 H0Z" fill="#3d5f95"/><rect x="4.9" y="3.7" width="8.7" height="7.0" rx="0.6" fill="#27416c"/><rect x="6.0" y="4.9" width="6.5" height="4.4" fill="#cbd9ea"/><rect x="7" y="10.7" width="4.6" height="1.1" fill="#27416c"/></g>
<g transform="translate(56.7,549.9) scale(1.0)"><path d="M0 1.2 L4.5 0 L7.4 0.9 V11.8 H0 Z" fill="#2b4775"/><path d="M0 1.2 L4.5 0 V11.8 H0Z" fill="#3d5f95"/><rect x="4.9" y="3.7" width="8.7" height="7.0" rx="0.6" fill="#27416c"/><rect x="6.0" y="4.9" width="6.5" height="4.4" fill="#cbd9ea"/><rect x="7" y="10.7" width="4.6" height="1.1" fill="#27416c"/></g>
<path d="M61.12 135.5 H72.8 L68.47999999999999 141.98 H56.8 Z" fill="#45b5f3"/><path d="M56.8 141.98 H68.47999999999999 L72.8 135.5 V138.02 L68.47999999999999 144.5 H56.8 Z" fill="#1a90dc"/><path d="M62.12 137.75 H69.8 M60.62 139.82 H68.3" stroke="#d5ecfb" stroke-width="0.6" fill="none"/>
<path d="M61.12 470.0 H72.8 L68.47999999999999 476.48 H56.8 Z" fill="#45b5f3"/><path d="M56.8 476.48 H68.47999999999999 L72.8 470.0 V472.52 L68.47999999999999 479.0 H56.8 Z" fill="#1a90dc"/><path d="M62.12 472.25 H69.8 M60.62 474.32 H68.3" stroke="#d5ecfb" stroke-width="0.6" fill="none"/>
<path d="M58.50000000000001 223.7 V227.7 A6.4 2.7 0 0 0 71.30000000000001 227.7 V223.7 Z" fill="#1b8de0"/><path d="M62.02 225.85999999999999 V230.13 H67.78 V225.85999999999999 Z" fill="#4db6f3" opacity="0.55"/><ellipse cx="64.9" cy="223.7" rx="6.4" ry="2.7" fill="#3fabf0"/><path d="M61.38 224.2 L64.30000000000001 223.39999999999998 M65.5 223.1 L68.42 223.89999999999998" stroke="#e9f6fe" stroke-width="0.6"/>
<path d="M57.9 305.9 V309.9 A6.4 2.7 0 0 0 70.7 309.9 V305.9 Z" fill="#1b8de0"/><path d="M61.419999999999995 308.06 V312.33 H67.17999999999999 V308.06 Z" fill="#4db6f3" opacity="0.55"/><ellipse cx="64.3" cy="305.9" rx="6.4" ry="2.7" fill="#3fabf0"/><path d="M60.779999999999994 306.4 L63.699999999999996 305.59999999999997 M64.89999999999999 305.29999999999995 L67.82 306.09999999999997" stroke="#e9f6fe" stroke-width="0.6"/>
<path d="M61.9 388.7 L65.26 387.09999999999997 L66.7 387.59999999999997 V391.51599999999996 L63.339999999999996 392.25199999999995 L61.9 391.88399999999996 Z" fill="#4f78c9"/><path d="M61.9 391.88399999999996 L63.339999999999996 392.25199999999995 L66.7 391.51599999999996 V394.49999999999994 L63.339999999999996 396.29999999999995 L61.9 395.79999999999995 Z" fill="#e43a40"/>
</g>
<g fill="#3c3c3c" stroke="#3c3c3c" stroke-width="0.7"><path d="M192.1 7.3 h2.3 l-2.3 2.3 z M193.2 8.4 l1.7 1.7" /><path d="M199.4 7.3 h-2.3 l2.3 2.3 z M198.3 8.4 l-1.7 1.7" /><path d="M192.1 14.2 h2.3 l-2.3 -2.3 z M193.2 13.1 l1.7 -1.7" /><path d="M199.4 14.2 h-2.3 l2.3 -2.3 z M198.3 13.1 l-1.7 -1.7" /></g>
<text x="208.70" y="14.00" font-size="6.6" fill="#737a81" textLength="56.00" lengthAdjust="spacingAndGlyphs">Core network map</text>
<path d="M269.3 8.8 L271.4 11 L269.3 13.2" stroke="#8a939b" stroke-width="0.7" fill="none"/>
<text x="276.80" y="14.00" font-size="6.6" fill="#737a81" textLength="19.00" lengthAdjust="spacingAndGlyphs">Page 1</text>
<path d="M299.3 9.9 L301.5 12.1 L303.7 9.9" stroke="#6a747c" stroke-width="0.8" fill="none"/>
<rect x="373.5" y="7" width="7" height="7" rx="1" fill="#f5a623"/><path d="M375 9.6 H379 M375 11.6 H379" stroke="#fff" stroke-width="0.7"/>
<rect x="389.3" y="7.6" width="7.6" height="6" rx="0.5" fill="#fff" stroke="#444" stroke-width="0.8"/><line x1="389.3" y1="8.2" x2="396.9" y2="8.2" stroke="#444" stroke-width="0.9"/>
<line x1="406" y1="13.3" x2="412.3" y2="8.3" stroke="#555" stroke-width="0.8"/>
<path d="M421.3 13.6 Q422.5 9.8 424 11.6 T427 8.4" stroke="#9aa3ab" stroke-width="0.7" fill="none"/><path d="M426 7 L428.3 7.4 L427.3 9.4 Z" fill="#555"/>
<text x="438.00" y="14.00" font-size="6.9" fill="#3a4550" textLength="24.61" lengthAdjust="spacingAndGlyphs">Stencils</text>
<line x1="472.7" y1="6.4" x2="472.7" y2="15.6" stroke="#7c858c" stroke-width="0.7"/>
<text x="482.10" y="14.00" font-size="6.9" fill="#3a4550" textLength="75.69" lengthAdjust="spacingAndGlyphs">Overall Health Monitor</text>
<text x="567.90" y="14.00" font-size="6.9" fill="#3a4550" textLength="14.10" lengthAdjust="spacingAndGlyphs">Map</text>
<text x="591.70" y="14.00" font-size="6.9" fill="#3a4550" textLength="24.20" lengthAdjust="spacingAndGlyphs">Actions</text>
<line x1="623.3" y1="6.4" x2="623.3" y2="15.6" stroke="#7c858c" stroke-width="0.7"/>
<g stroke="#444" stroke-width="0.75" fill="none"><path d="M633.3 9 V7.8 H634.8 M638.6 7.8 H640.1 V9 M633.3 12.8 V14 H634.8 M638.6 14 H640.1 V12.8"/><rect x="635" y="9.3" width="3.4" height="3.2"/></g>
<line x1="650" y1="10.9" x2="654.6" y2="10.9" stroke="#333" stroke-width="1.1"/>
<line x1="665" y1="10.7" x2="700.3" y2="10.7" stroke="#c9ced2" stroke-width="0.9"/>
<circle cx="677.7" cy="10.7" r="2.5" fill="#fff" stroke="#c3c9ce" stroke-width="0.6"/>
<path d="M710 10.9 H715.2 M712.6 8.3 V13.5" stroke="#333" stroke-width="1.1"/>
<text x="725.60" y="14.00" font-size="6.9" fill="#222" textLength="17.38" lengthAdjust="spacingAndGlyphs">100%</text>
<rect x="757.3" y="4.3" width="14.2" height="12.1" fill="#f4f166" stroke="#f7cb20" stroke-width="0.9"/>
<g stroke="#55652a" stroke-width="0.85" fill="none"><path d="M761.4 7.4 H766.6 L768.1 8.9 V13.8 H761.4 Z" fill="#a9b548"/><path d="M762.8 7.4 V9.6 H765.8 V7.4" fill="#e9ec7a"/><rect x="762.8" y="11.3" width="3.9" height="2.5" fill="#e9ec7a"/></g>
<g fill="none" stroke="#666" stroke-width="0.65"><circle cx="779.2" cy="10.7" r="0.95"/><circle cx="782.9" cy="8.2" r="0.95"/><circle cx="782.9" cy="13.1" r="0.95"/><path d="M780.1 10.2 L782 8.8 M780.1 11.2 L782 12.5"/></g>
<g stroke="#2f8ff0" stroke-width="1.0" fill="none"><path d="M189.3 26.2 L191.7 28.4 L194.1 26.2"/><path d="M189.3 28.8 L191.7 31 L194.1 28.8"/></g>
<rect x="222" y="25.2" width="7" height="7" rx="0.8" fill="#68c545"/><path d="M224 27.2 L225.5 30.4 L227 27.2" stroke="#fff" stroke-width="0.7" fill="none"/>
<text x="232.50" y="31.00" font-size="7" fill="#222" textLength="31.26" lengthAdjust="spacingAndGlyphs">Data View</text>
<rect x="310.3" y="25.2" width="6" height="7" rx="0.8" fill="#f5a04a"/><rect x="311.5" y="26.6" width="3.6" height="4.2" fill="#fbd3a6"/>
<text x="319.70" y="31.00" font-size="7" fill="#222" textLength="28.55" lengthAdjust="spacingAndGlyphs">Runbook</text>
<rect x="393.8" y="25.4" width="6.6" height="6.6" rx="0.6" fill="#8cc63f"/><rect x="395.4" y="27" width="3.4" height="3.4" fill="#e9f5d3"/><path d="M397.1 27 V30.4 M395.4 28.7 H398.8" stroke="#8cc63f" stroke-width="0.5"/>
<text x="404.70" y="31.00" font-size="7" fill="#222" textLength="26.55" lengthAdjust="spacingAndGlyphs">Network</text>
<path d="M669.5 31.2 h5 v3.2 a2.5 2.5 0 0 1 -5 0 z" fill="#f7b52c"/><rect x="670.6" y="32" width="2.8" height="1.6" fill="#fde7a8"/><path d="M670.2 38.3 v2.2 M672 38.3 v2.2 M673.8 38.3 v2.2" stroke="#3c8fe0" stroke-width="0.8" stroke-dasharray="0.9 0.5"/>
<text x="678.60" y="38.00" font-size="6.9" fill="#484848" textLength="25.58" lengthAdjust="spacingAndGlyphs">Incident</text>
<rect x="724.3" y="34.4" width="1.8" height="1.6" fill="#f5a04a"/><path d="M728 32.3 h4.2" stroke="#c6a1ee" stroke-width="1.5"/><path d="M728 35.2 h4.2" stroke="#f6c750" stroke-width="1.5"/><path d="M728 38.1 h4.2" stroke="#b5e04a" stroke-width="1.5"/>
<text x="735.20" y="38.00" font-size="6.9" fill="#484848" textLength="42.99" lengthAdjust="spacingAndGlyphs">Decision Tree</text>
<text x="356.40" y="72.00" font-size="15.4" font-weight="bold" fill="#2a7cb5" textLength="206.58" lengthAdjust="spacingAndGlyphs">Online Music Application Path</text>
<text x="206.70" y="132.00" font-size="7.3" font-weight="bold" fill="#1a1a1a" textLength="63.01" lengthAdjust="spacingAndGlyphs">BGP Configuration</text>
<path d="M356.2 130.3 l2.1 -2.1 l2.1 2.1" stroke="#333" stroke-width="0.95" fill="none"/>
<text x="206.70" y="145.00" font-size="7.0" fill="#2a2a2a" textLength="55.52" lengthAdjust="spacingAndGlyphs">router bgp 65001</text>
<text x="208.50" y="154.00" font-size="7.0" fill="#2a2a2a" textLength="80.99" lengthAdjust="spacingAndGlyphs">bgp router-id 10.11.11.11</text>
<text x="208.50" y="163.00" font-size="7.0" fill="#2a2a2a" textLength="83.50" lengthAdjust="spacingAndGlyphs">bgp log-neighbor-changes</text>
<text x="208.50" y="172.00" font-size="7.0" fill="#2a2a2a" textLength="126.50" lengthAdjust="spacingAndGlyphs">redistribute ospf 1 route-map MAP-BOS</text>
<text x="208.50" y="182.00" font-size="7.0" fill="#2a2a2a" textLength="123.01" lengthAdjust="spacingAndGlyphs">neighbor 10.10.10.10 remote-as 65001</text>
<text x="206.70" y="199.00" font-size="7.0" fill="#2a2a2a" textLength="16.19" lengthAdjust="spacingAndGlyphs">Chris</text>
<text x="286.80" y="199.00" font-size="7.0" fill="#2a2a2a" textLength="73.62" lengthAdjust="spacingAndGlyphs">2021/12/12 2:20:20 PM</text>
<text x="419.70" y="156.00" font-size="7.3" font-weight="bold" fill="#1a1a1a" textLength="62.00" lengthAdjust="spacingAndGlyphs">ACL Configuration</text>
<path d="M569.1999999999999 153.9 l2.1 -2.1 l2.1 2.1" stroke="#333" stroke-width="0.95" fill="none"/>
<text x="419.70" y="169.00" font-size="7.0" fill="#2a2a2a" textLength="138.49" lengthAdjust="spacingAndGlyphs">access-list 98 permit 172.25.0.0 0.0.255.255</text>
<text x="419.70" y="178.00" font-size="7.0" fill="#2a2a2a" textLength="66.48" lengthAdjust="spacingAndGlyphs">access-list 98 remark</text>
<text x="419.70" y="187.00" font-size="7.0" fill="#2a2a2a" textLength="109.46" lengthAdjust="spacingAndGlyphs">redistribute_Emu_MGMT_Network</text>
<text x="419.70" y="196.00" font-size="7.0" fill="#2a2a2a" textLength="138.49" lengthAdjust="spacingAndGlyphs">access-list 99 permit 10.0.0.0 0.255.255.255</text>
<text x="419.70" y="206.00" font-size="7.0" fill="#2a2a2a" textLength="116.46" lengthAdjust="spacingAndGlyphs">access-list 99 remark Office-Network</text>
<text x="419.70" y="222.00" font-size="7.0" fill="#2a2a2a" textLength="16.19" lengthAdjust="spacingAndGlyphs">Chris</text>
<text x="499.80" y="222.00" font-size="7.0" fill="#2a2a2a" textLength="73.62" lengthAdjust="spacingAndGlyphs">2021/12/12 2:20:20 PM</text>
<text x="610.70" y="210.00" font-size="7.3" font-weight="bold" fill="#1a1a1a" textLength="68.29" lengthAdjust="spacingAndGlyphs">Policy Configuration</text>
<path d="M760.4 208.8 l2.1 -2.1 l2.1 2.1" stroke="#333" stroke-width="0.95" fill="none"/>
<text x="610.70" y="224.00" font-size="7.0" fill="#2a2a2a" textLength="130.30" lengthAdjust="spacingAndGlyphs">route-map Ospf10-To-Ospf110 permit 20</text>
<text x="612.50" y="232.00" font-size="7.0" fill="#2a2a2a" textLength="64.50" lengthAdjust="spacingAndGlyphs">match ip address 99</text>
<text x="612.50" y="242.00" font-size="7.0" fill="#2a2a2a" textLength="45.00" lengthAdjust="spacingAndGlyphs">set metric 300</text>
<text x="612.50" y="251.00" font-size="7.0" fill="#2a2a2a" textLength="31.01" lengthAdjust="spacingAndGlyphs">set tag 10</text>
<text x="611.3" y="260.00" font-size="7.0" fill="#2a2a2a">!</text>
<text x="610.70" y="278.00" font-size="7.0" fill="#2a2a2a" textLength="16.19" lengthAdjust="spacingAndGlyphs">Chris</text>
<text x="691.00" y="278.00" font-size="7.0" fill="#2a2a2a" textLength="73.62" lengthAdjust="spacingAndGlyphs">2021/12/12 2:20:20 PM</text>
<text x="398.70" y="482.00" font-size="7.3" font-weight="bold" fill="#1a1a1a" textLength="66.00" lengthAdjust="spacingAndGlyphs">OSPF Configuration</text>
<path d="M548.4 480.59999999999997 l2.1 -2.1 l2.1 2.1" stroke="#333" stroke-width="0.95" fill="none"/>
<text x="398.70" y="495.00" font-size="7.0" fill="#2a2a2a" textLength="45.50" lengthAdjust="spacingAndGlyphs">router ospf 10</text>
<text x="400.50" y="504.00" font-size="7.0" fill="#2a2a2a" textLength="71.50" lengthAdjust="spacingAndGlyphs">log-adjacency-changes</text>
<text x="400.50" y="514.00" font-size="7.0" fill="#2a2a2a" textLength="129.49" lengthAdjust="spacingAndGlyphs">redistribute ospf 110 subnets route-map</text>
<text x="398.70" y="522.00" font-size="7.0" fill="#2a2a2a" textLength="61.48" lengthAdjust="spacingAndGlyphs">Ospf110-To-Ospf10</text>
<text x="400.50" y="532.00" font-size="7.0" fill="#2a2a2a" textLength="116.99" lengthAdjust="spacingAndGlyphs">network 172.24.31.195 0.0.0.0 area 0</text>
<text x="398.70" y="549.00" font-size="7.0" fill="#2a2a2a" textLength="16.19" lengthAdjust="spacingAndGlyphs">Chris</text>
<text x="479.00" y="549.00" font-size="7.0" fill="#2a2a2a" textLength="73.62" lengthAdjust="spacingAndGlyphs">2021/12/12 2:20:20 PM</text>
<g transform="translate(760.1,14.2)"><path d="M3.4 8.2 V1.1 C3.4 -0.35 5.6 -0.35 5.6 1.1 V4.6 C5.6 3.3 7.6 3.3 7.6 4.7 V5.2 C7.6 3.9 9.6 4.0 9.6 5.4 V5.9 C9.6 4.8 11.6 4.9 11.6 6.3 V9.6 C11.6 11.5 10.3 12.2 10.1 13.2 V14.3 H4.3 V13 C3.4 11.8 1.6 10 0.6 8.6 C-0.2 7.4 0.9 6.2 1.9 6.9 L3.4 8.2 Z" fill="#fff" stroke="#151515" stroke-width="0.95" stroke-linejoin="round"/><path d="M5.6 4.6 V7.6 M7.6 5.2 V7.6 M9.6 5.9 V7.8" stroke="#151515" stroke-width="0.8"/></g>
</svg>
</body></html>
